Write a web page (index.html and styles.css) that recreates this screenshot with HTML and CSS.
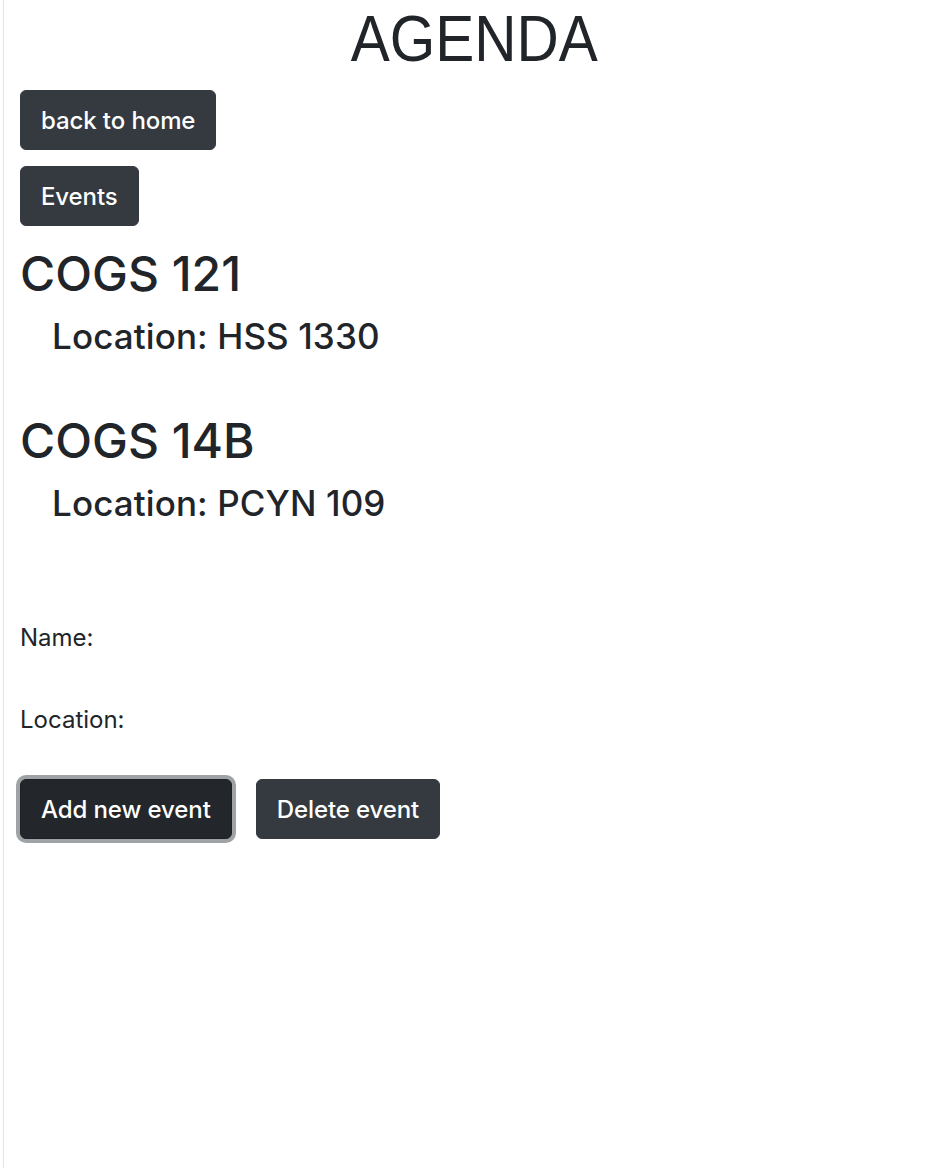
FILE: index.html
```html
<!DOCTYPE html>
<html lang="en">
<head>
<meta charset="utf-8">
<title>Agenda</title>
<link rel="stylesheet" href="styles.css">
</head>
<body>
<div class="page">
  <h1 class="title"><span class="title-text">AGENDA</span></h1>
  <div class="nav">
    <a class="btn" href="#">back to home</a>
    <a class="btn" href="#">Events</a>
  </div>
  <div class="events">
    <div class="event">
      <h2 class="event-name">COGS 121</h2>
      <h4 class="event-loc">Location: HSS 1330</h4>
    </div>
    <div class="event">
      <h2 class="event-name">COGS 14B</h2>
      <h4 class="event-loc">Location: PCYN 109</h4>
    </div>
  </div>
  <form class="form">
    <label class="field">Name:</label>
    <label class="field field-last">Location:</label>
    <div class="actions">
      <button type="button" class="btn btn-focus">Add new event</button>
      <button type="button" class="btn">Delete event</button>
    </div>
  </form>
</div>
</body>
</html>
```

FILE: styles.css
```css
html, body {
  margin: 0;
  padding: 0;
  background: #fff;
}

body {
  font-family: Inter, "Noto Sans", sans-serif;
  color: #212529;
}

.page {
  margin-left: 3px;
  border-left: 1px solid #e4e4e4;
  min-height: 1168px;
  box-sizing: border-box;
  padding: 0 16px;
}

.title {
  margin: 0 0 12px;
  text-align: center;
  font-family: "Liberation Sans", Arial, sans-serif;
  font-weight: 400;
  font-size: 65px;
  line-height: 78px;
  padding-left: 6px;
}

.title-text {
  display: inline-block;
  transform: scaleX(0.9);
}

.nav {
  display: flex;
  flex-direction: column;
  align-items: flex-start;
  gap: 16px;
}

.btn {
  display: inline-flex;
  align-items: center;
  justify-content: center;
  box-sizing: border-box;
  height: 60px;
  padding: 0 20px;
  background: #343a40;
  color: #fff;
  border: 1px solid #343a40;
  border-radius: 6px;
  font-family: Inter, "Noto Sans", sans-serif;
  font-size: 24px;
  font-weight: 500;
  letter-spacing: -0.1px;
  text-decoration: none;
  cursor: pointer;
}

.btn-focus {
  background: #23272b;
  border-color: #1d2124;
  box-shadow: 0 0 0 4px rgba(82, 88, 93, 0.55);
}

.events {
  margin-top: 19px;
}

.event-name {
  margin: 0;
  font-size: 48px;
  font-weight: 500;
  line-height: 58px;
  letter-spacing: 0;
}

.event-loc {
  margin: 12px 0 55px;
  padding-left: 32px;
  font-size: 35px;
  font-weight: 500;
  line-height: 42px;
  letter-spacing: 0.1px;
}

.form {
  display: flex;
  flex-direction: column;
  align-items: flex-start;
  margin-top: 96px;
}

.field {
  font-size: 24px;
  line-height: 36px;
  margin-bottom: 46px;
}

.field-last {
  margin-bottom: 41px;
}

.actions {
  display: flex;
  gap: 24px;
}
```
